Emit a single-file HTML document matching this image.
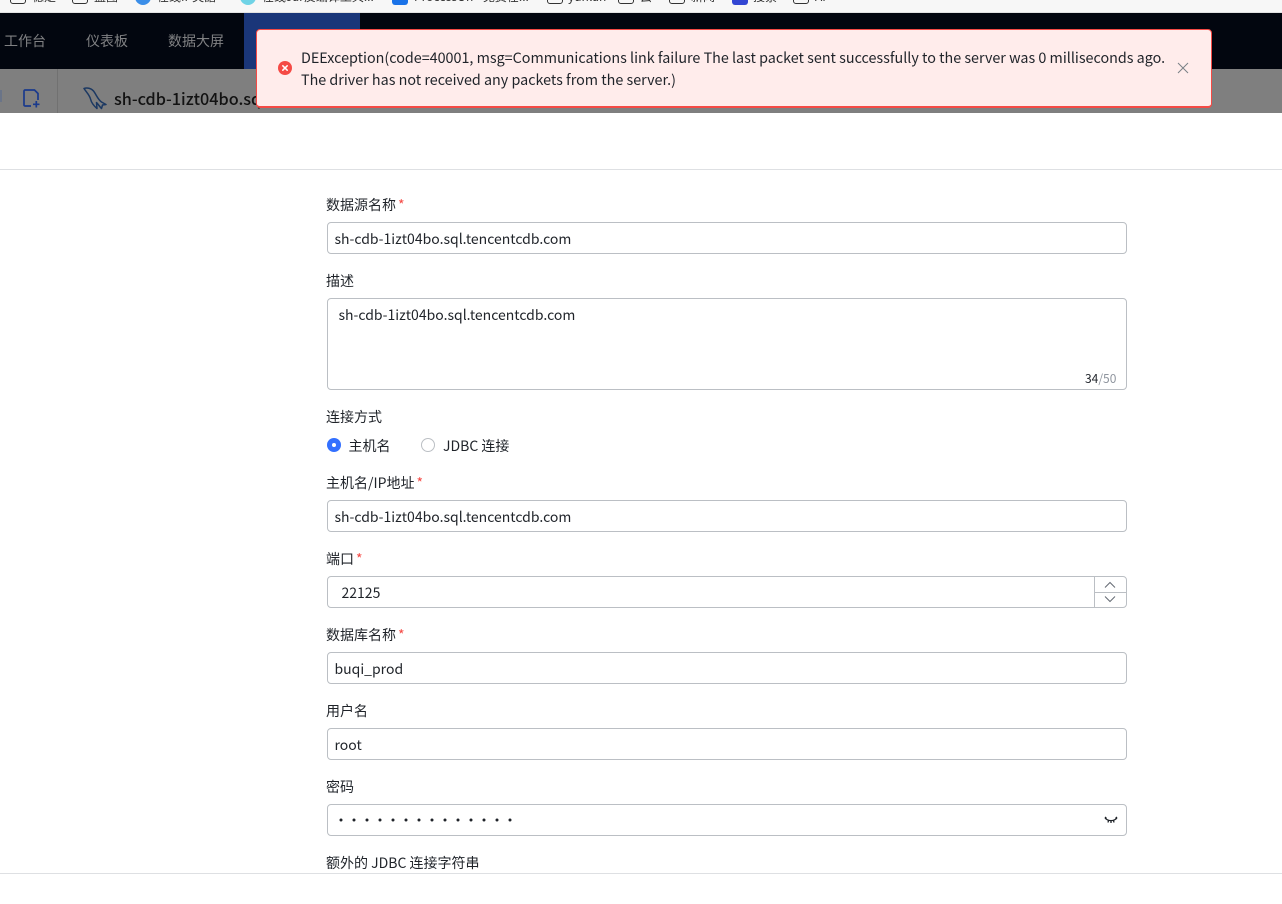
<!DOCTYPE html>
<html lang="zh">
<head>
<meta charset="utf-8">
<title>数据源</title>
<style>
*{box-sizing:border-box;margin:0;padding:0}
html,body{width:1282px;height:904px;overflow:hidden;background:#fff}
body{position:relative;font-family:"Noto Sans CJK SC","Liberation Sans",sans-serif;font-size:14px;color:#1f2329}
.a{position:absolute;white-space:nowrap}
.lb{position:absolute;left:326px;font-size:14px;line-height:22px;color:#1f2329;white-space:nowrap}
.lb i{font-style:normal;color:#f54a45;margin-left:2px}
.in{position:absolute;left:327px;width:800px;height:32px;border:1px solid #bbbfc4;border-radius:4px;padding-left:6.5px;line-height:33px;font-size:14px;color:#1f2329;background:#fff;white-space:nowrap}
.fd{position:absolute;top:-10px;width:16px;height:14px;border:1.5px solid #333;border-radius:3px;background:#f7f7f7}
.bk{position:absolute;top:-11px;font-size:12px;line-height:16px;color:#333;white-space:nowrap}
</style>
</head>
<body>
<!-- browser bookmarks -->
<div class="a" style="left:0;top:0;width:1282px;height:13px;background:#f7f7f7;border-bottom:1px solid #e2e2e2;overflow:hidden">
<div class="fd" style="left:10px"></div><div class="bk" style="left:32px">稳定</div>
<div class="fd" style="left:72px"></div><div class="bk" style="left:94px">蓝图</div>
<div class="a" style="left:135px;top:-11px;width:16px;height:16px;border-radius:50%;background:#3b8ee8"></div><div class="bk" style="left:157px">在线IP英語</div>
<div class="a" style="left:240px;top:-11px;width:16px;height:16px;border-radius:50%;background:#6fd3e6"></div><div class="bk" style="left:262px">在线Jar反编译工具...</div>
<div class="a" style="left:392px;top:-10px;width:16px;height:15px;border-radius:3px;background:#1a73e8"></div><div class="bk" style="left:414px">ProcessOn - 免费在...</div>
<div class="fd" style="left:547px"></div><div class="bk" style="left:568px">yunlan</div>
<div class="fd" style="left:618px"></div><div class="bk" style="left:640px">云</div>
<div class="fd" style="left:669px"></div><div class="bk" style="left:691px">新闻</div>
<div class="a" style="left:732px;top:-10px;width:16px;height:15px;border-radius:3px;background:#3346d3"></div><div class="bk" style="left:753px">搜索</div>
<div class="fd" style="left:793px"></div><div class="bk" style="left:815px">AI</div>
</div>
<!-- nav -->
<div class="a" style="left:0;top:13px;width:1282px;height:56px;background:#02060f"></div>
<div class="a" style="left:244px;top:13px;width:116px;height:56px;background:#1a3679"></div>
<div class="a" style="left:4px;top:30px;font-size:14px;line-height:22px;color:#808183">工作台</div>
<div class="a" style="left:86px;top:30px;font-size:14px;line-height:22px;color:#808183">仪表板</div>
<div class="a" style="left:168px;top:30px;font-size:14px;line-height:22px;color:#808183">数据大屏</div>
<!-- dim strip -->
<div class="a" style="left:0;top:69px;width:1282px;height:44px;background:#7f7f7f;overflow:hidden">
<div class="a" style="left:57px;top:0;width:1px;height:44px;background:#717171"></div>
<div class="a" style="left:0;top:21px;width:2px;height:12px;background:#6a7488"></div>
<svg class="a" style="left:23px;top:20px" width="17" height="19" viewBox="0 0 17 19" fill="none" stroke="#1a3a8c" stroke-width="1.700"><path d="M8 17H2a1 1 0 0 1-1-1V2a1 1 0 0 1 1-1h9.500L15 4.500V11"/><path d="M10 15.300h6.500M13.300 12v6.500"/></svg>
<svg class="a" style="left:83px;top:18px" width="24" height="24" viewBox="0 0 24 24" fill="none" stroke="#1b3862" stroke-width="1.500" stroke-linejoin="round"><path d="M1 1.500C4 .5 8 1 10.500 4C13 7 14.500 12 18.500 15L23 17.500L19.500 18L18.500 21.500C16.500 19.500 15.500 17.500 13.500 15.500L14 21.500C11 19 8.500 16 7.500 12C6.500 8 4 6 1 1.500Z"/></svg>
<div class="a" style="left:114px;top:17px;font-size:16.200px;line-height:24px;font-weight:500;color:#121212">sh-cdb-1izt04bo.sql.tencentcdb.com</div>
</div>
<!-- header / footer rules -->
<div class="a" style="left:0;top:169px;width:1282px;height:1px;background:#dee0e3"></div>
<!-- form -->
<div class="lb" style="top:194px">数据源名称<i>*</i></div>
<div class="in" style="top:222px">sh-cdb-1izt04bo.sql.tencentcdb.com</div>
<div class="lb" style="top:270px">描述</div>
<div class="in" style="top:298px;height:92px;padding:5px 0 0 10.500px;line-height:22px">sh-cdb-1izt04bo.sql.tencentcdb.com</div>
<div class="a" style="left:1085px;top:370px;font-size:12px;line-height:18px;color:#1f2329">34<span style="color:#8f959e">/50</span></div>
<div class="lb" style="top:406px">连接方式</div>
<div class="a" style="left:327px;top:438px;width:14px;height:14px;border-radius:50%;background:#3370ff"></div>
<div class="a" style="left:332px;top:443px;width:4px;height:4px;border-radius:50%;background:#fff"></div>
<div class="a" style="left:348.500px;top:435px;font-size:14px;line-height:22px">主机名</div>
<div class="a" style="left:421px;top:438px;width:14px;height:14px;border-radius:50%;border:1px solid #bbbfc4;background:#fff"></div>
<div class="a" style="left:443px;top:435px;font-size:14px;line-height:22px">JDBC 连接</div>
<div class="lb" style="top:472px">主机名/IP地址<i>*</i></div>
<div class="in" style="top:500px">sh-cdb-1izt04bo.sql.tencentcdb.com</div>
<div class="lb" style="top:548px">端口<i>*</i></div>
<div class="in" style="top:576px;padding-left:13.500px">22125</div>
<div class="a" style="left:1094px;top:577px;width:1px;height:30px;background:#bbbfc4"></div>
<div class="a" style="left:1095px;top:592px;width:31px;height:1px;background:#bbbfc4"></div>
<svg class="a" style="left:1104px;top:580px" width="12" height="24" viewBox="0 0 12 24" fill="none" stroke="#646a73" stroke-width="1"><path d="M1 7.500L6 2.500L11 7.500"/><path d="M1 16.500L6 21.500L11 16.500"/></svg>
<div class="lb" style="top:624px">数据库名称<i>*</i></div>
<div class="in" style="top:652px">buqi_prod</div>
<div class="lb" style="top:700px">用户名</div>
<div class="in" style="top:728px">root</div>
<div class="lb" style="top:776px">密码</div>
<div class="in" style="top:804px"></div>
<svg class="a" style="left:338px;top:817px" width="176" height="6" viewBox="0 0 176 6" fill="#1f2329"><circle cx="3" cy="3" r="1.500"/><circle cx="16" cy="3" r="1.500"/><circle cx="29" cy="3" r="1.500"/><circle cx="42" cy="3" r="1.500"/><circle cx="55" cy="3" r="1.500"/><circle cx="68" cy="3" r="1.500"/><circle cx="81" cy="3" r="1.500"/><circle cx="94" cy="3" r="1.500"/><circle cx="107" cy="3" r="1.500"/><circle cx="120" cy="3" r="1.500"/><circle cx="133" cy="3" r="1.500"/><circle cx="146" cy="3" r="1.500"/><circle cx="159" cy="3" r="1.500"/><circle cx="172" cy="3" r="1.500"/></svg>
<svg class="a" style="left:1104px;top:815px" width="14" height="10" viewBox="0 0 14 10" fill="none" stroke="#1f2329" stroke-width="1.300"><path d="M1 3c3 3.500 9 3.500 12 0"/><path d="M1 2l1.500 1.500M13 2l-1.500 1.500M4.500 5.500L4 7.500M9.500 5.500L10 7.500M7 6v2"/></svg>
<div class="lb" style="top:852px">额外的 JDBC 连接字符串</div>
<div class="a" style="left:0;top:873px;width:1282px;height:31px;background:#fff;border-top:1px solid #dee0e3"></div>
<!-- toast -->
<div class="a" style="left:256px;top:29px;width:956px;height:79px;background:#ffeceb;border:1px solid #f54a45;border-bottom-width:2px;border-radius:4px"></div>
<svg class="a" style="left:278px;top:61px" width="14" height="14" viewBox="0 0 14 14"><circle cx="7" cy="7" r="7" fill="#f54a45"/><path d="M4.800 4.800l4.400 4.400M9.200 4.800l-4.400 4.400" stroke="#fff" stroke-width="1.500" stroke-linecap="round"/></svg>
<div class="a" style="left:301px;top:47px;font-size:14.330px;line-height:22px;color:#1f2329">DEException(code=40001, msg=Communications link failure The last packet sent successfully to the server was 0 milliseconds ago.<br>The driver has not received any packets from the server.)</div>
<svg class="a" style="left:1177px;top:62px" width="12" height="12" viewBox="0 0 12 12" fill="none" stroke="#7a8088" stroke-width="1"><path d="M1 1l10 10M11 1L1 11"/></svg>
</body>
</html>
